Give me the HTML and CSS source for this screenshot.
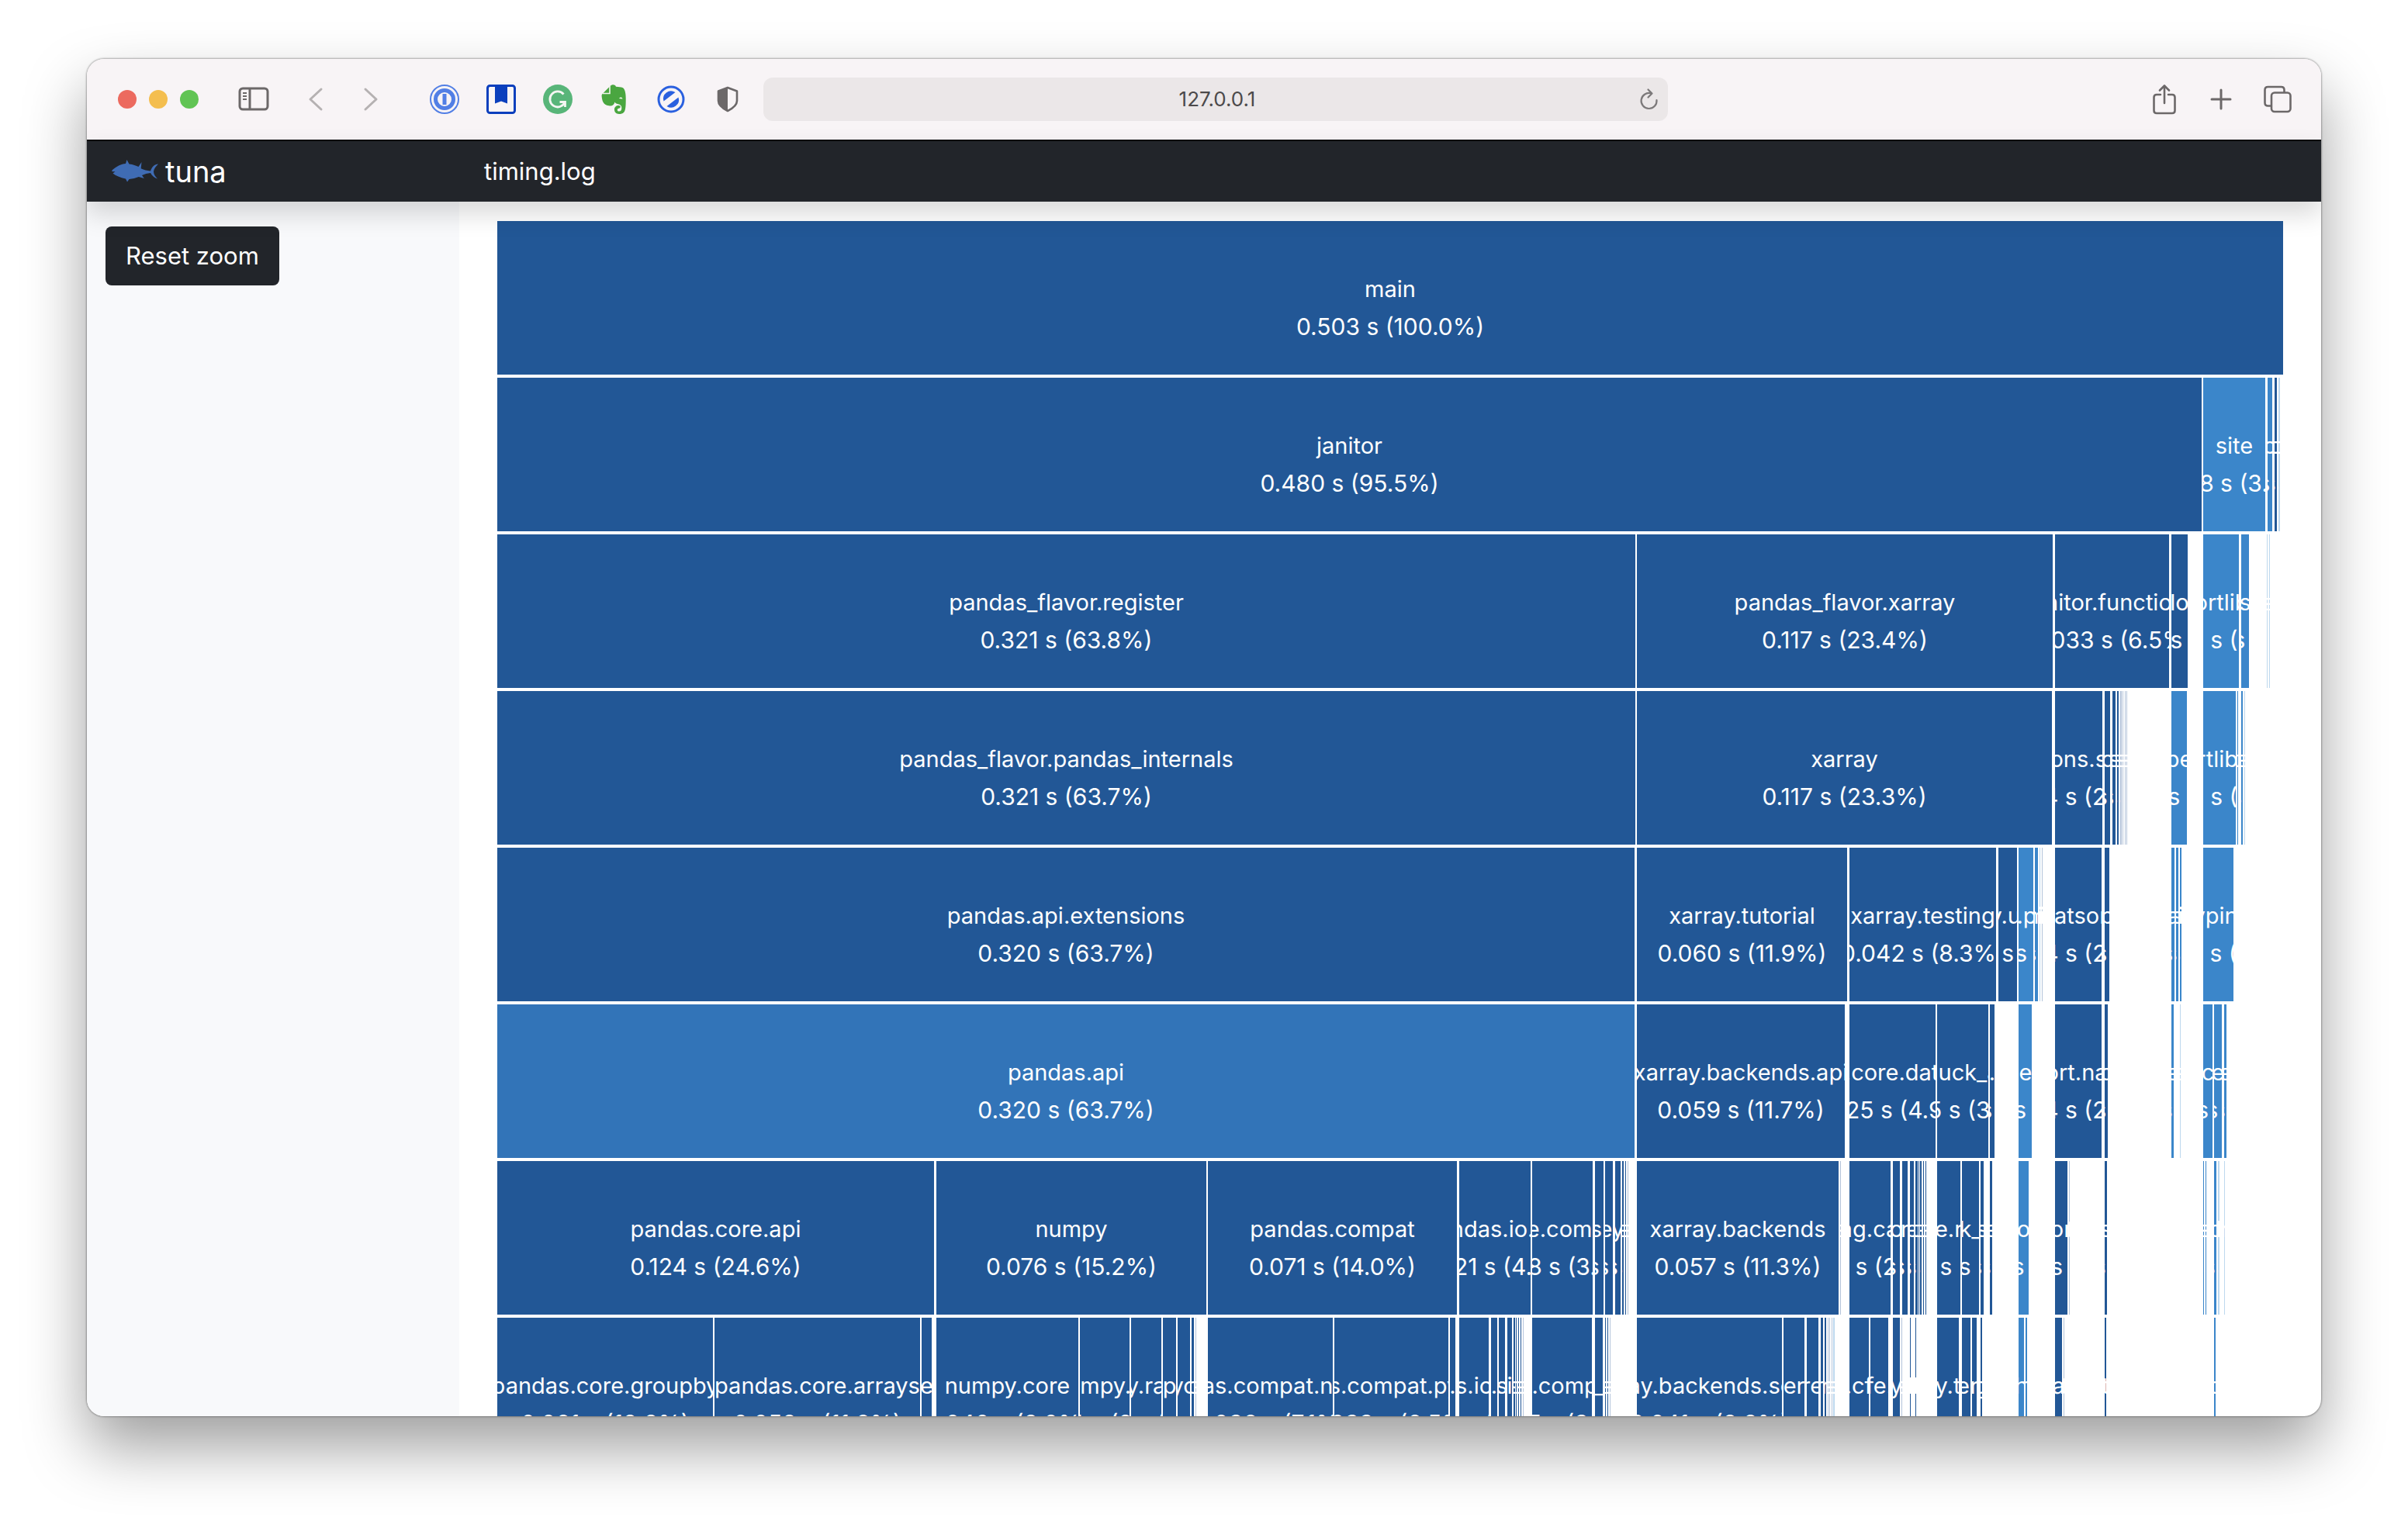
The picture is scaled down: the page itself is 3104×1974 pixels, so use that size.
FILE: index.html
```html
<!DOCTYPE html>
<html lang="en">
<head>
<meta charset="utf-8">
<title>tuna - timing.log</title>
<link rel="stylesheet" href="styles.css">
</head>
<body>
<div class="window">
  <header class="toolbar">
    <div class="lights"><span class="light close"></span><span class="light minimise"></span><span class="light expand"></span></div>
    <button class="icon-btn sidebar-btn" aria-label="Sidebar"><svg width="40" height="32" viewBox="0 0 40 32" fill="none" stroke="#6c6869" stroke-width="3"><rect x="2" y="2" width="36" height="27" rx="4"/><path d="M15 2v27"/><path d="M6 8h5M6 12h5M6 16h5" stroke-width="2"/></svg></button>
    <button class="icon-btn back-btn" aria-label="Back"><svg width="20" height="32" viewBox="0 0 20 32" fill="none" stroke="#b5b1b2" stroke-width="3" stroke-linecap="round" stroke-linejoin="round"><path d="M17 3 3 16 17 29"/></svg></button>
    <button class="icon-btn forward-btn" aria-label="Forward"><svg width="20" height="32" viewBox="0 0 20 32" fill="none" stroke="#b5b1b2" stroke-width="3" stroke-linecap="round" stroke-linejoin="round"><path d="M3 3 17 16 3 29"/></svg></button>
    <div class="extensions">
      <button class="icon-btn" aria-label="Passwords"><svg width="38" height="38" viewBox="0 0 38 38"><circle cx="19" cy="19" r="18" fill="none" stroke="#527fe5" stroke-width="2"/><circle cx="19" cy="19" r="11.5" fill="none" stroke="#527fe5" stroke-width="5"/><rect x="16.500" y="12" width="5" height="14" fill="#527fe5"/></svg></button>
      <button class="icon-btn" aria-label="Bookmark"><svg width="38" height="38" viewBox="0 0 38 38"><rect x="1.500" y="1.500" width="35" height="35" rx="3" fill="none" stroke="#0b3fbd" stroke-width="3"/><path d="M11 2h16v22.500l-8-3-8 3z" fill="#0b3fbd"/></svg></button>
      <button class="icon-btn" aria-label="Writing check"><svg width="38" height="38" viewBox="0 0 38 38"><circle cx="19" cy="19" r="19" fill="#58b579"/><path d="M26.500 12.500A10 10 0 1 0 28 23M21.500 22.500h7v6.500" fill="none" stroke="#f4f6f3" stroke-width="2.800"/></svg></button>
      <button class="icon-btn" aria-label="Web clipper"><svg width="34" height="38" viewBox="0 0 34 38"><path d="M12 1.500c3-2.500 6.500-1.200 7 1.200 3.500.3 6.500.4 8.500 1.300 3.500 2 4.300 8 4.200 15 0 8-.2 14.500-2.700 17-1.500 1.600-3.500 2-6 2-4 0-6-2.500-6-5.700 0-3.300 2.200-5.300 5.500-5.300 1.500 0 2.300.7 2.300 1.800 0 1.200-1 1.700-2 1.900-1.500.3-2 1-2 2 0 1.300 1 1.800 2.300 1.800 2.500 0 3.200-2 3.200-4.500 0-3-1.800-4.300-4.500-4.800-2.500-.4-3.600-1.400-4.300-2.700-1 4-3.500 5.500-7.500 4.800-5-.8-8-3-9-9.300C.3 14 .5 12.500 2 11.500z" fill="#4aa640"/><path d="M1.500 11.500h9.500V1.500" fill="none" stroke="#f3f5ee" stroke-width="1.600"/><path d="M23 18c1.500-2 3.500-2 4.500.5z" fill="#f8f5f6"/></svg></button>
      <button class="icon-btn" aria-label="Content blocker"><svg width="36" height="36" viewBox="0 0 36 36"><circle cx="18" cy="18" r="16" fill="none" stroke="#2a60df" stroke-width="3"/><path d="M8.500 20.500A10 10 0 0 1 23.500 9zM27.500 15.500A10 10 0 0 1 12.500 27z" fill="#2a60df"/></svg></button>
      <button class="icon-btn" aria-label="Privacy report"><svg width="28" height="34" viewBox="0 0 28 34"><path d="M14 2 2 6.500V19c0 6 5 9.500 12 13 7-3.500 12-7 12-13V6.500z" fill="none" stroke="#6c6869" stroke-width="2.600" stroke-linejoin="round"/><path d="M14 2 2 6.500V19c0 6 5 9.500 12 13z" fill="#6c6869"/></svg></button>
    </div>
    <form class="address">
      <input class="address-input" type="text" value="127.0.0.1" aria-label="Address">
      <button class="reload-btn" type="button" aria-label="Reload"><svg width="26" height="30" viewBox="0 0 26 30" fill="none" stroke="#7c797a" stroke-width="2.200" stroke-linecap="round" stroke-linejoin="round"><path d="M22.500 16A10 10 0 1 1 15 7.300M11.500 2.500 16.500 7.500 11.500 12.500"/></svg></button>
    </form>
    <div class="window-actions">
      <button class="icon-btn" aria-label="Share"><svg width="32" height="40" viewBox="0 0 32 40" fill="none" stroke="#6c6869" stroke-width="2.600" stroke-linecap="round" stroke-linejoin="round"><path d="M11 14H6q-3.500 0-3.500 3.500v17Q2.500 38 6 38h20q3.500 0 3.500-3.500v-17Q29.500 14 26 14h-5M16 25V3M10 8.500 16 2.500l6 6"/></svg></button>
      <button class="icon-btn" aria-label="New tab"><svg width="28" height="28" viewBox="0 0 28 28" stroke="#6c6869" stroke-width="3" stroke-linecap="round"><path d="M14 2v24M2 14h24"/></svg></button>
      <button class="icon-btn" aria-label="Tab overview"><svg width="36" height="36" viewBox="0 0 36 36" fill="none" stroke="#6c6869" stroke-width="2.600"><rect x="10" y="9.500" width="24.500" height="24.500" rx="4"/><path d="M10 26.500H5.500q-4 0-4-4V6q0-4 4-4h17q4 0 4 4v3.500"/></svg></button>
    </div>
  </header>

  <nav class="navbar">
    <a class="brand" href="#"><svg width="60" height="30" viewBox="0 0 60 30"><path d="M0 15l1-2C7 8 12 5.500 18 5l1.500-5 3 5.500c5 .6 9 2 12 3.600l4-6.100-.8 8.200c4 1.800 8 3 12.300 3.200C52 9 55 6 60 5.500 56 9.500 54.500 12 54 15.500c.3 3.500 2 6 5 9-4.500-1.200-7-4-9-7.500-4 .3-7.500 1.500-11 3l2.800 4-7-2c-3.800 1.500-8 2.600-12.300 3L20 28.500l-2-4C11 23 5 20.500 1.500 17.500l3-2.200z" fill="#3f6cb4"/></svg>tuna</a>
    <a class="nav-link" href="#">timing.log</a>
  </nav>

  <div class="content">
    <aside class="sidebar"><button class="reset-btn" id="reset">Reset zoom</button></aside>
    <main class="chart" id="chart"></main>
  </div>
</div>
<script src="chart.js"></script>
</body>
</html>
```

FILE: styles.css
```css
* { box-sizing: border-box; }

body {
  margin: 0;
  height: 100vh;
  padding: 76px 112px 148px;
  display: flex;
  background: #fff;
  font-family: Inter, "Liberation Sans", sans-serif;
  font-size: 31px;
  line-height: 48px;
}

button, input { font: inherit; border: 0; padding: 0; background: none; }
a { color: inherit; text-decoration: none; }
svg { display: block; flex: none; }

.window {
  flex: 1;
  min-width: 0;
  display: flex;
  flex-direction: column;
  overflow: hidden;
  background: #fff;
  border-radius: 22px;
  box-shadow: 0 0 2px 1px rgba(0, 0, 0, .3), 0 40px 80px rgba(0, 0, 0, .38);
}

/* Browser toolbar */
.toolbar {
  flex: none;
  height: 104px;
  padding: 0 36px 0 40px;
  display: flex;
  align-items: center;
  background: #f8f4f6;
}
.lights { display: flex; gap: 16px; }
.light { width: 24px; height: 24px; border-radius: 50%; }
.close { background: #ec6a5f; }
.minimise { background: #f4be4f; }
.expand { background: #61c454; }
.icon-btn {
  flex: none;
  width: 40px;
  height: 40px;
  display: flex;
  align-items: center;
  justify-content: center;
}
.sidebar-btn { margin-left: 51px; }
.back-btn { margin-left: 40px; }
.forward-btn { margin-left: 31px; }
.extensions, .window-actions { display: flex; align-items: center; gap: 33px; }
.extensions { margin: 0 26px 0 55px; }
.window-actions { margin-left: auto; }
.address {
  flex: 0 1 1166px;
  height: 56px;
  display: flex;
  align-items: center;
  padding: 0 8px 0 44px;
  background: #ebe7e8;
  border-radius: 12px;
}
.address-input {
  flex: 1;
  min-width: 0;
  text-align: center;
  font-size: 26px;
  color: #4c4a4b;
}
.reload-btn { width: 32px; display: flex; justify-content: center; }

/* Application bar */
.navbar {
  flex: none;
  position: relative;
  z-index: 1;
  height: 80px;
  display: flex;
  align-items: center;
  background: #22252a;
  border-top: 2px solid #07080a;
  color: #fff;
  box-shadow: 0 16px 32px rgba(0, 0, 0, .15);
}
.brand {
  flex: 0 0 16.6667%;
  display: flex;
  align-items: center;
  gap: 9px;
  padding-left: 32px;
  font-size: 38px;
}
.nav-link { padding-left: 32px; }

.content { flex: 1; min-height: 0; display: flex; }
.sidebar { flex: 0 0 16.6667%; padding: 32px 24px; background: #f8f9fb; }
.reset-btn {
  height: 76px;
  padding: 0 26px;
  border-radius: 8px;
  background: #22252a;
  color: #fff;
}

/* Icicle chart */
.chart {
  flex: 1;
  min-width: 0;
  padding: 25px 49px 0;
  overflow: hidden;
}
.level { display: flex; height: 198px; margin-bottom: 4px; }
.gap { flex: 1 1 0; }
.block {
  flex: 1 1 0;
  min-width: 0;
  padding-top: 64px;
  overflow: hidden;
  display: flex;
  flex-direction: column;
  align-items: center;
  white-space: nowrap;
  color: #fff;
}
.name { font-size: 29px; }
.time { font-size: 30px; }
.d { background: #225796; }
.m { background: #3274b8; }
.l { background: #3b86ca; }
.fd { background: #b4c4da; }
.fl { background: #bdd8ee; }
```

FILE: chart.js
```js
// Each level lists its blocks as [start, end, shade, name, time].
// Shades: d = own time small, m / l = lighter, fd / fl = faint slivers.
const S = "0.002 s (0.4%)";
const levels = [
  [[0, 2302, "d", "main", "0.503 s (100.0%)"]],
  [
    [0, 2197, "d", "janitor", "0.480 s (95.5%)"],
    [2199, 2279, "l", "site", "0.018 s (3.5%)"],
    [2282, 2288, "l", "o", S], [2291, 2294, "d", "o", S], [2296, 2298, "fl", "o", S]
  ],
  [
    [0, 1467, "d", "pandas_flavor.register", "0.321 s (63.8%)"],
    [1469, 2005, "d", "pandas_flavor.xarray", "0.117 s (23.4%)"],
    [2008, 2155, "d", "janitor.functions", "0.033 s (6.5%)"],
    [2158, 2179, "d", "lo", "0.005 s (1.0%)"],
    [2199, 2245, "l", "importlib.util", "0.010 s (2.1%)"],
    [2248, 2258, "l", "s", S], [2281, 2282, "fl", "s", S], [2284, 2285, "fl", "a", S]
  ],
  [
    [0, 1467, "d", "pandas_flavor.pandas_internals", "0.321 s (63.7%)"],
    [1469, 2004, "d", "xarray", "0.117 s (23.3%)"],
    [2008, 2069, "d", "janitor.functions.sort_naturally", "0.014 s (2.8%)"],
    [2072, 2079, "d", "c", S], [2082, 2086, "d", "s", S], [2088, 2090, "d", "s", S],
    [2092, 2094, "fd", "s", S], [2095, 2096, "fd", "e", S], [2098, 2099, "fd", "s", S], [2100, 2101, "fd", "s", S],
    [2158, 2178, "l", "pe", "0.004 s (0.9%)"],
    [2199, 2241, "l", "importlib._abc", "0.009 s (1.8%)"],
    [2243, 2244, "l", "c", S], [2248, 2250, "l", "e", S], [2252, 2253, "fl", "s", S]
  ],
  [
    [0, 1466, "d", "pandas.api.extensions", "0.320 s (63.7%)"],
    [1469, 1740, "d", "xarray.tutorial", "0.060 s (11.9%)"],
    [1743, 1932, "d", "xarray.testing", "0.042 s (8.3%)"],
    [1935, 1959, "d", "xarray.ufuncs", "0.005 s (1.1%)"],
    [1961, 1980, "l", "email.parser", "0.004 s (0.8%)"],
    [1982, 1986, "l", "m", S], [1988, 1989, "fl", "i", S], [1991, 1992, "fd", "i", S],
    [2008, 2068, "d", "natsort", "0.014 s (2.7%)"], [2072, 2078, "d", "p", S],
    [2158, 2162, "l", "a", S], [2164, 2167, "l", "s", S], [2169, 2171, "l", "i", S],
    [2199, 2238, "l", "typing", "0.009 s (1.7%)"]
  ],
  [
    [0, 1466, "m", "pandas.api", "0.320 s (63.7%)"],
    [1469, 1737, "d", "xarray.backends.api", "0.059 s (11.7%)"],
    [1743, 1854, "d", "xarray.core.dataarray", "0.025 s (4.9%)"],
    [1856, 1922, "d", "xarray.core.duck_array_ops_np", "0.015 s (3.0%)"],
    [1924, 1930, "d", ".", S],
    [1961, 1978, "l", "queue", "0.004 s (0.8%)"],
    [2008, 2068, "d", "natsort.natsort", "0.014 s (2.7%)"], [2072, 2076, "d", "c", S],
    [2158, 2161, "l", "e", S], [2169, 2170, "fl", "e", S],
    [2199, 2211, "l", "c", "0.003 s (0.5%)"], [2213, 2223, "l", "e", S], [2226, 2229, "l", "e", S]
  ],
  [
    [0, 563, "d", "pandas.core.api", "0.124 s (24.6%)"],
    [566, 914, "d", "numpy", "0.076 s (15.2%)"],
    [916, 1237, "d", "pandas.compat", "0.071 s (14.0%)"],
    [1240, 1332, "d", "pandas.io.api", "0.021 s (4.1%)"],
    [1334, 1412, "d", "pandas.core.computation.api", "0.018 s (3.5%)"],
    [1415, 1426, "d", "s.", S], [1428, 1438, "d", "e.", S], [1441, 1448, "d", "y", S],
    [1450, 1452, "d", "e", S], [1454, 1455, "d", "e", S], [1457, 1458, "fd", "e", S],
    [1469, 1729, "d", "xarray.backends", "0.057 s (11.3%)"], [1731, 1732, "fd", "s", S],
    [1743, 1796, "d", "xarray.coding.calendar_utils", "0.012 s (2.4%)"],
    [1799, 1808, "d", "o", S], [1811, 1818, "d", "r", S], [1821, 1826, "d", "e", S], [1828, 1831, "d", "o", S],
    [1832, 1833, "d", "p", S], [1834, 1836, "d", "e", S], [1838, 1839, "d", "c", S], [1841, 1842, "d", "e", S],
    [1856, 1886, "d", "e.r", "0.006 s (1.3%)"],
    [1888, 1910, "d", "k_", "0.005 s (0.9%)"],
    [1912, 1916, "d", "s", S], [1924, 1927, "d", "e", S],
    [1961, 1974, "l", "o", "0.003 s (0.6%)"],
    [2008, 2024, "d", "or", "0.004 s (0.7%)"], [2026, 2027, "fd", "t", S], [2072, 2075, "d", "s", S],
    [2199, 2200, "l", "s", S], [2202, 2203, "l", "s", S], [2213, 2216, "l", "c", S],
    [2218, 2220, "fl", "l", S], [2226, 2227, "fl", "r", S]
  ],
  [
    [0, 278, "d", "pandas.core.groupby", "0.061 s (12.2%)"],
    [280, 545, "d", "pandas.core.arrays", "0.058 s (11.6%)"],
    [547, 560, "d", "e", S],
    [566, 749, "d", "numpy.core", "0.040 s (8.0%)"],
    [751, 815, "d", "numpy.lib", "0.014 s (2.8%)"],
    [817, 856, "d", "numpy.random", "0.008 s (1.7%)"],
    [858, 875, "d", "p", S], [877, 893, "d", "yo", S], [895, 898, "d", "p", S], [900, 901, "fd", "e", S],
    [916, 1077, "d", "pandas.compat.numpy", "0.036 s (7.1%)"],
    [1079, 1226, "d", "pandas.compat.pyarrow", "0.033 s (6.5%)"],
    [1228, 1235, "d", ".", S],
    [1240, 1278, "d", "s.io", "0.008 s (1.7%)"],
    [1281, 1289, "d", ".", S], [1291, 1299, "d", "s", S], [1302, 1308, "d", "i", S], [1310, 1312, "d", "s", S],
    [1313, 1314, "d", "b", S], [1316, 1317, "d", "s", S], [1319, 1320, "d", "e", S], [1322, 1323, "fd", "s", S],
    [1334, 1411, "d", "pandas.core.computation.expr", "0.017 s (3.4%)"],
    [1415, 1425, "d", "_", S], [1428, 1429, "d", "a", S], [1431, 1432, "d", "s", S], [1434, 1435, "fd", "s", S],
    [1469, 1656, "d", "xarray.backends.scipy_", "0.041 s (8.2%)"],
    [1658, 1685, "d", "cere", "0.006 s (1.2%)"],
    [1688, 1703, "d", "re", S], [1706, 1709, "d", "n", S], [1711, 1713, "d", "r", S], [1715, 1716, "fd", "a", S],
    [1717, 1718, "fd", "s", S], [1720, 1721, "fd", "s", S], [1722, 1724, "fl", "s", S],
    [1743, 1768, "d", ".cf", "0.005 s (1.1%)"],
    [1770, 1793, "d", "fe.", "0.005 s (1.0%)"],
    [1799, 1808, "d", "y", S], [1810, 1811, "fd", "s", S], [1821, 1822, "d", "l", S], [1828, 1829, "d", "l", S],
    [1856, 1884, "d", "y.t", "0.006 s (1.2%)"],
    [1888, 1899, "d", "e.", S], [1901, 1907, "d", "r", S], [1912, 1914, "d", "g", S],
    [1961, 1968, "l", "h", S], [1970, 1972, "l", "h", S],
    [2008, 2017, "d", "a", S], [2019, 2020, "fd", "t", S], [2072, 2074, "d", "t", S],
    [2213, 2215, "l", "c", S]
  ]
];

const chart = document.getElementById("chart");

function add(parent, className, text) {
  const el = document.createElement("div");
  el.className = className;
  if (text) el.textContent = text;
  parent.appendChild(el);
  return el;
}

function draw() {
  chart.replaceChildren();
  const total = levels[0][0][1];
  for (const blocks of levels) {
    const level = add(chart, "level");
    let x = 0;
    for (const [start, end, shade, name, time] of blocks) {
      if (start > x) add(level, "gap").style.flexGrow = start - x;
      const block = add(level, "block " + shade);
      block.style.flexGrow = end - start;
      add(block, "name", name);
      add(block, "time", time);
      x = end;
    }
    if (x < total) add(level, "gap").style.flexGrow = total - x;
  }
}

document.getElementById("reset").addEventListener("click", draw);
draw();
```
